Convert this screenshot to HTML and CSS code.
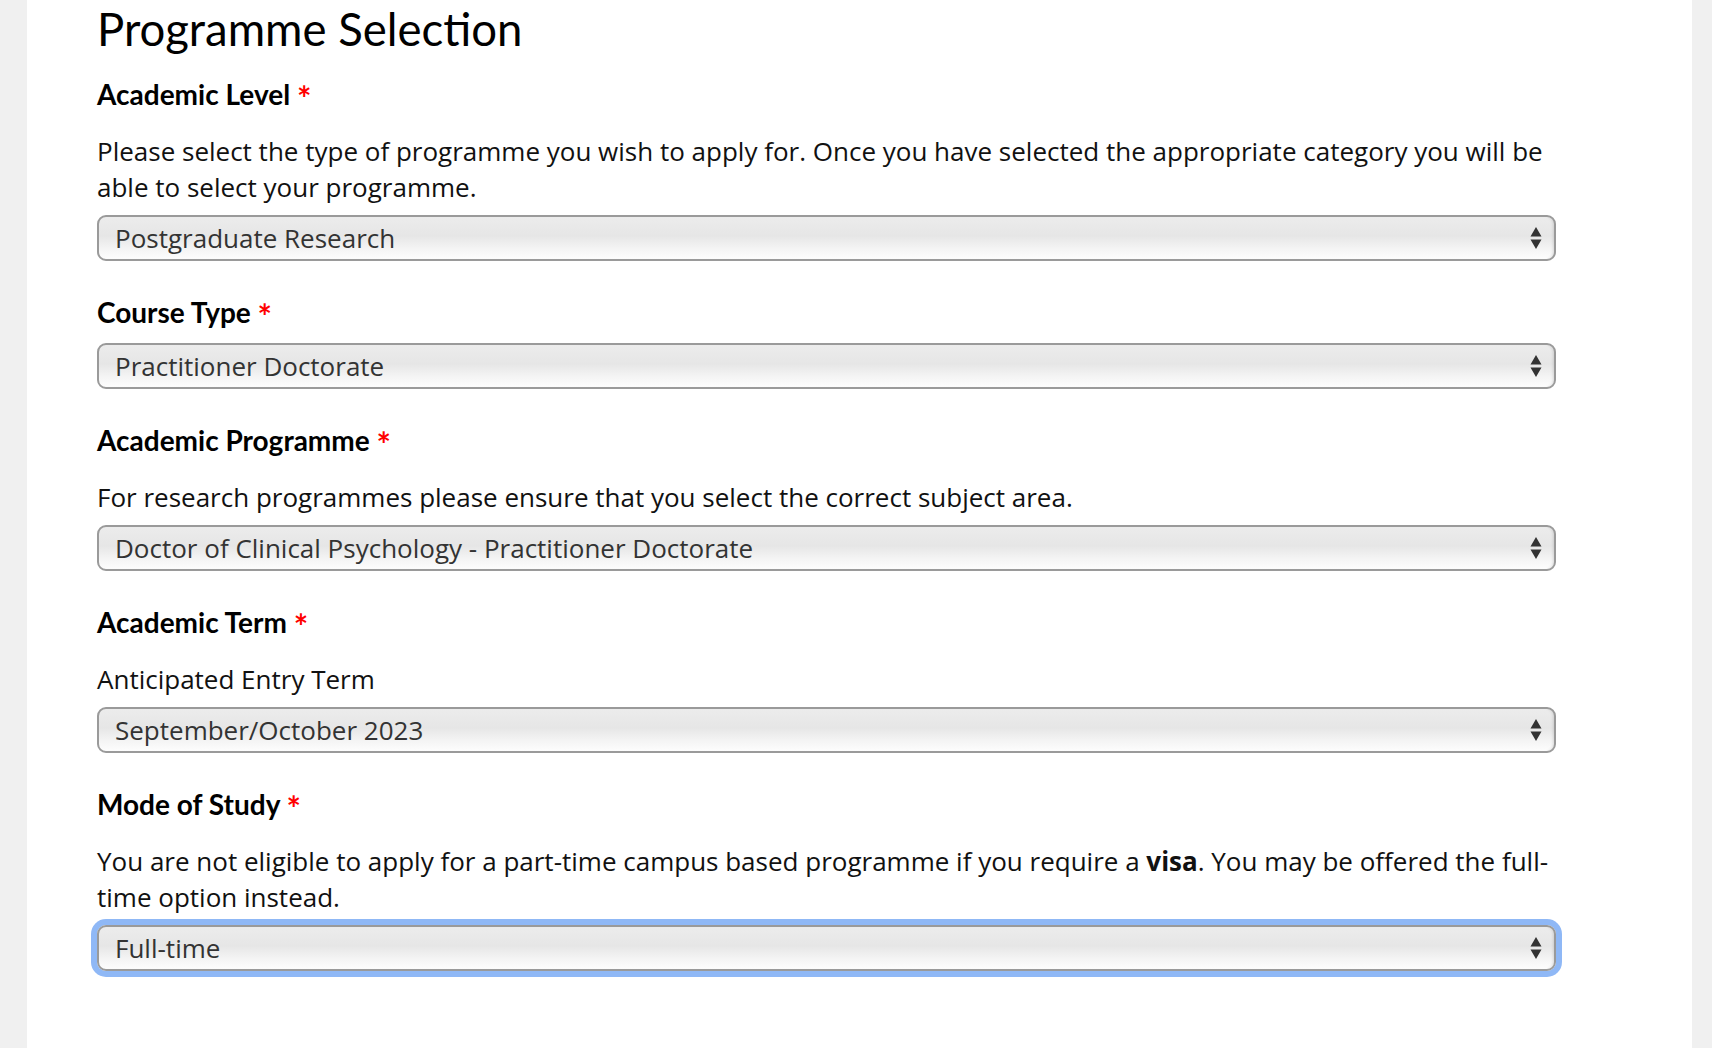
FILE: index.html
```html
<!DOCTYPE html>
<html lang="en">

<head>
    <meta charset="UTF-8">
    <meta name="viewport" content="width=device-width, initial-scale=1.0">
    <title>Programme Selection</title>
    <link rel="stylesheet" href="styles.css">
</head>

<body>
    <div class="page">
        <h1>Programme Selection</h1>

        <div class="field">
            <label for="level">Academic Level <span class="req">*</span></label>
            <p class="help">Please select the type of programme you wish to apply for. Once you have selected the
                appropriate category you will be able to select your programme.</p>
            <div class="select-wrap">
                <select id="level">
                    <option>Postgraduate Research</option>
                </select>
                <svg class="arrows" width="12" height="24" viewBox="0 0 12 24"><path d="M6 1 L11.5 10.5 H0.5 Z M0.5 13.5 H11.5 L6 23 Z" fill="#333"/></svg>
            </div>
        </div>

        <div class="field">
            <label for="type">Course Type <span class="req">*</span></label>
            <div class="select-wrap">
                <select id="type">
                    <option>Practitioner Doctorate</option>
                </select>
                <svg class="arrows" width="12" height="24" viewBox="0 0 12 24"><path d="M6 1 L11.5 10.5 H0.5 Z M0.5 13.5 H11.5 L6 23 Z" fill="#333"/></svg>
            </div>
        </div>

        <div class="field">
            <label for="prog">Academic Programme <span class="req">*</span></label>
            <p class="help">For research programmes please ensure that you select the correct subject area.</p>
            <div class="select-wrap">
                <select id="prog">
                    <option>Doctor of Clinical Psychology - Practitioner Doctorate</option>
                </select>
                <svg class="arrows" width="12" height="24" viewBox="0 0 12 24"><path d="M6 1 L11.5 10.5 H0.5 Z M0.5 13.5 H11.5 L6 23 Z" fill="#333"/></svg>
            </div>
        </div>

        <div class="field">
            <label for="term">Academic Term <span class="req">*</span></label>
            <p class="help">Anticipated Entry Term</p>
            <div class="select-wrap">
                <select id="term">
                    <option>September/October 2023</option>
                </select>
                <svg class="arrows" width="12" height="24" viewBox="0 0 12 24"><path d="M6 1 L11.5 10.5 H0.5 Z M0.5 13.5 H11.5 L6 23 Z" fill="#333"/></svg>
            </div>
        </div>

        <div class="field">
            <label for="mode">Mode of Study <span class="req">*</span></label>
            <p class="help">You are not eligible to apply for a part-time campus based programme if you require a
                <strong>visa</strong>. You may be offered the full-time option instead.</p>
            <div class="select-wrap">
                <select id="mode" class="focused">
                    <option>Full-time</option>
                </select>
                <svg class="arrows" width="12" height="24" viewBox="0 0 12 24"><path d="M6 1 L11.5 10.5 H0.5 Z M0.5 13.5 H11.5 L6 23 Z" fill="#333"/></svg>
            </div>
        </div>
    </div>
</body>

</html>
```

FILE: styles.css
```css
html,
body {
    margin: 0;
    padding: 0;
}

body {
    background: #f0f0f0;
    font-family: 'Open Sans', 'Noto Sans', sans-serif;
    color: #111;
    overflow: hidden;
}

.page {
    background: #fff;
    margin: 0 20px 0 27px;
    min-height: 100vh;
    padding: 2px 136px 40px 70px;
    box-sizing: border-box;
}

h1 {
    font-family: 'Lato', sans-serif;
    font-weight: 400;
    font-size: 45.5px;
    line-height: 1.2;
    color: #000;
    margin: 0 0 22px;
}

.field {
    margin-bottom: 36px;
}

label {
    display: block;
    font-family: 'Lato', sans-serif;
    font-weight: 700;
    font-size: 28px;
    line-height: 30px;
    color: #000;
    margin-bottom: 16px;
}

.req {
    color: #f00;
    font-size: 34px;
    line-height: 0;
    position: relative;
    top: 6px;
}

.help {
    font-size: 26px;
    line-height: 36px;
    margin: 24px 0 10px;
}

.help strong {
    font-weight: 700;
}

.select-wrap {
    position: relative;
}

select {
    -webkit-appearance: none;
    appearance: none;
    display: block;
    width: 100%;
    height: 46px;
    box-sizing: border-box;
    padding: 0 44px 0 16px;
    font-family: 'Open Sans', 'Noto Sans', sans-serif;
    font-size: 26px;
    color: #333;
    border: 2px solid #9a9a9a;
    border-radius: 9px;
    background: linear-gradient(to bottom, #ececec 0%, #e6e6e6 45%, #f4f4f4 75%, #fdfdfd 100%);
    box-shadow: inset -3px 0 3px -2px rgba(0, 0, 0, 0.12);
    outline: none;
}

select.focused {
    box-shadow: 0 0 0 6px #8fb8f6, inset -3px 0 3px -2px rgba(0, 0, 0, 0.12);
}

.arrows {
    position: absolute;
    right: 14px;
    top: 11px;
    pointer-events: none;
}
```
